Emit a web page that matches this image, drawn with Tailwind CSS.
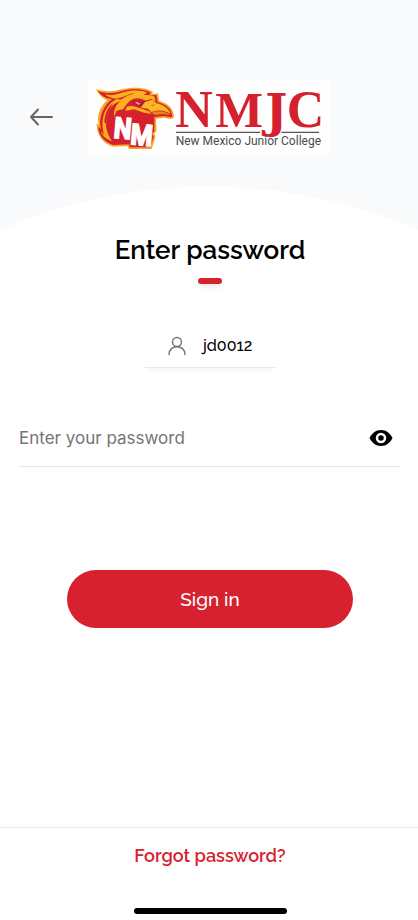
<!DOCTYPE html>
<html lang="en">
<head>
  <meta charset="UTF-8">
  <meta name="viewport" content="width=device-width, initial-scale=1.0">
  <title>Enter password</title>
  <script src="https://cdn.jsdelivr.net/npm/@tailwindcss/browser@4"></script>
</head>
<body class="bg-white min-h-screen flex flex-col text-black font-[Raleway,Lato,sans-serif]">
  <!-- Header -->
  <header class="relative bg-[#f9fafc]">
    <div class="relative z-10 flex items-center pt-20 pl-7">
      <button type="button" aria-label="Back" class="w-7 h-7">
        <svg class="w-7 h-7" viewBox="0 0 28 28" fill="none" stroke="#666" stroke-width="2" stroke-linecap="round" stroke-linejoin="round">
          <path d="M24 13H3M10 5.500L3 13l7 7.500"/>
        </svg>
      </button>
      <svg class="ml-8 w-[242px] h-[75px]" viewBox="12 12 726 225" role="img" aria-label="New Mexico Junior College">
        <rect x="12" y="12" width="726" height="225" fill="#fefefe"/>
        <!-- Eagle head -->
        <path fill="#f6a623" d="M36 40C65 48 88 48 112 40C150 31 188 35 207 48L204 55L222 52L226 75C251 81 269 98 270 122L264 129L240 125L216 128L217 166L210 173L215 181L203 219L135 219L130 210L86 212C56 202 37 177 38 142L45 147C37 124 46 94 69 73C56 68 45 57 36 40Z"/>
        <path fill="#d5202e" d="M42 45C68 54 90 52 114 45C148 36 184 40 200 50L194 59L217 57L221 79C246 84 263 100 265 120L261 124L240 120L211 123L211 165L204 174L209 181L199 214L139 214L134 205L88 207C60 198 43 176 43 152L51 160C43 128 54 97 78 74L84 70C64 67 50 58 42 45Z"/>
        <!-- Gold plumage -->
        <path fill="#fbb01e" d="M62 55C88 60 100 54 118 49C144 41 174 42 190 50L176 57L211 61L216 78L204 68L186 73C166 61 150 64 136 75C128 82 122 90 118 98L98 104L90 122C89 100 97 84 111 75C88 81 75 97 70 119L66 151C69 171 76 184 84 196C64 189 53 176 51 165L61 178C53 155 54 128 62 109C70 90 82 76 100 69C86 68 72 63 62 55Z"/>
        <path fill="#d5202e" d="M96 66C115 67 130 55 150 50C136 61 124 67 108 71ZM88 80C75 100 66 124 68 148L61 138C62 114 72 92 88 80Z"/>
        <path fill="#fbb01e" d="M112 72C122 62 140 53 160 52L205 60L212 74L200 68L184 74C164 62 148 66 136 76C128 84 122 92 118 99L100 103C101 90 105 80 112 72Z"/>
        <!-- Eye -->
        <path fill="#b51f29" d="M143 74L172 79L185 72L178 91L158 88Z"/>
        <path fill="#fff" d="M153 78L170 81L164 86Z"/>
        <path fill="#2b1114" d="M161 79L168 80L165 84Z"/>
        <!-- Beak -->
        <path fill="#fbb724" d="M183 78L205 71L217 82C239 86 254 97 260 115C242 101 220 101 202 109L192 98L170 95Z"/>
        <path fill="#e9821f" d="M199 88L214 84L206 92ZM203 110C221 103 242 104 260 118L236 114L213 117Z"/>
        <path fill="#fbb01e" d="M128 92C144 86 160 94 174 98L195 106L203 113L180 110L150 100L124 105Z"/>
        <text x="86" y="186" transform="rotate(5 86 186)" fill="#fff" stroke="#fff" stroke-width="3" font-family="'Roboto Condensed', 'Liberation Sans', sans-serif" font-weight="700" font-size="90">N<tspan dx="-3" dy="15">M</tspan></text>
        <!-- Wordmark -->
        <g fill="#d5202e" font-weight="700">
          <text x="274" y="152" font-size="156" font-family="'Liberation Serif', serif">N</text>
          <text x="394" y="152" font-size="152" font-family="'Liberation Serif', serif">M</text>
          <text x="544" y="152" font-size="140" font-family="'DejaVu Serif', serif">J</text>
          <text x="608" y="152" font-size="156" font-family="'Liberation Serif', serif">C</text>
        </g>
        <path d="M276 169H528M592 169H705" stroke="#555" stroke-width="4"/>
        <text x="275" y="207" fill="#4b4b4d" font-family="Roboto, sans-serif" font-size="36">New Mexico Junior College</text>
      </svg>
    </div>
    <svg class="block w-full h-[75px]" viewBox="0 0 418 75" preserveAspectRatio="none">
      <path d="M0 75C130 17 288 17 418 75Z" fill="#fff"/>
    </svg>
  </header>

  <main>
    <form id="passwordForm" class="flex flex-col items-center pl-[19px] pr-[17px]">
      <h1 class="text-[26px] leading-10 font-semibold">Enter password</h1>
      <div class="mt-2 w-6 h-1.5 rounded-full bg-[#d8212e] shadow-md"></div>

      <!-- Username -->
      <div class="mt-10 w-[130px] h-[44px] flex items-center gap-4 pl-[22px] border-b border-gray-200 shadow-[0_5px_5px_-3px_rgba(0,0,0,0.06)]">
        <svg class="w-5 h-5" viewBox="0 0 20 20" fill="none" stroke="#777" stroke-width="1.500" stroke-linecap="round">
          <circle cx="10" cy="6" r="4.500"/>
          <path d="M2 18.500C2 8 18 8 18 18.500"/>
        </svg>
        <span class="text-base font-medium">jd0012</span>
      </div>

      <!-- Password field -->
      <div class="mt-10 w-full h-[59px] pt-0.5 flex items-center border-b border-gray-200">
        <input type="password" id="password" name="password" aria-label="Password" placeholder="Enter your password"
          class="min-w-0 flex-1 h-10 font-[Inter,sans-serif] text-[17px] placeholder:text-[#757575] focus:outline-none" required>
        <button type="button" aria-label="Show password" class="mr-2">
          <svg class="w-6 h-6" viewBox="0 0 24 24">
            <path d="M12 4C6.500 4 3 7.500 .5 12C3 16.500 6.500 20 12 20S21 16.500 23.500 12C21 7.500 17.500 4 12 4Z"/>
            <circle cx="12" cy="12" r="4" fill="none" stroke="#fff" stroke-width="2.500"/>
          </svg>
        </button>
      </div>

      <button type="submit" class="mt-[103px] w-3/4 h-[58px] rounded-full bg-[#d8212e] text-white text-[19px] font-medium">Sign in</button>
    </form>
  </main>

  <!-- Footer -->
  <footer class="mt-auto border-t border-gray-200 flex flex-col items-center pl-0.5 pb-1.5">
    <a href="#" class="mt-3.5 text-lg leading-7 font-semibold text-[#d8212e]">Forgot password?</a>
    <div class="mt-[38px] w-[153px] h-1.5 rounded-full bg-black"></div>
  </footer>
</body>
</html>
